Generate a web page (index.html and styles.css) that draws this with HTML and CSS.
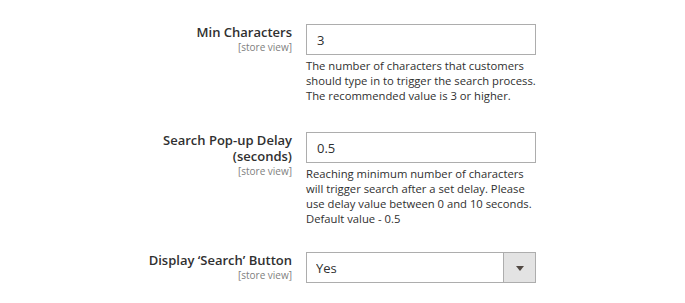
FILE: index.html
```html
<!DOCTYPE html>
<html lang="en">
<head>
<meta charset="utf-8">
<title>Search settings</title>
<link rel="stylesheet" href="styles.css">
</head>
<body>
<div class="form">
  <div class="field field-first">
    <div class="label">
      <span class="label-text">Min Characters</span>
      <span class="scope">[store view]</span>
    </div>
    <div class="control">
      <input class="input-text" type="text" value="3">
      <div class="note">The number of characters that customers should type in to trigger the search process. The recommended value is 3 or higher.</div>
    </div>
  </div>
  <div class="field">
    <div class="label">
      <span class="label-text">Search Pop-up Delay (seconds)</span>
      <span class="scope">[store view]</span>
    </div>
    <div class="control">
      <input class="input-text" type="text" value="0.5">
      <div class="note">Reaching minimum number of characters will trigger search after a set delay. Please use delay value between 0 and 10 seconds. Default value - 0.5</div>
    </div>
  </div>
  <div class="field field-select">
    <div class="label">
      <span class="label-text">Display ‘Search’ Button</span>
      <span class="scope">[store view]</span>
    </div>
    <div class="control">
      <div class="select-wrap">
        <select class="select">
          <option>Yes</option>
          <option>No</option>
        </select>
        <span class="select-button"><span class="arrow"></span></span>
      </div>
    </div>
  </div>
</div>
</body>
</html>
```
FILE: styles.css
```css
html, body {
  margin: 0;
  padding: 0;
  background: #ffffff;
}
body {
  font-family: "Open Sans", "Liberation Sans", sans-serif;
  color: #303030;
}
.form {
  display: flex;
  flex-direction: column;
  padding-top: 24px;
}
.field {
  display: grid;
  grid-template-columns: 292px 230px;
  column-gap: 14px;
  margin-top: 29px;
}
.field-first {
  margin-top: 0;
}
.field-select {
  margin-top: 26px;
}
.label {
  display: flex;
  flex-direction: column;
  align-items: flex-end;
  text-align: right;
  padding-left: 142px;
}
.label-text {
  font-size: 13px;
  font-weight: 600;
  line-height: 16px;
  color: #303030;
}
.scope {
  font-size: 10px;
  line-height: 14px;
  color: #808080;
}
.control {
  display: flex;
  flex-direction: column;
}
.input-text {
  box-sizing: border-box;
  width: 230px;
  height: 31px;
  margin: 0;
  padding: 0 10px;
  border: 1px solid #adadad;
  border-radius: 0;
  background: #ffffff;
  font-family: "Open Sans", "Liberation Sans", sans-serif;
  font-size: 13px;
  color: #303030;
  outline: none;
}
.note {
  margin-top: 3px;
  font-size: 11.25px;
  line-height: 15px;
  color: #303030;
}
.select-wrap {
  position: relative;
  width: 230px;
  height: 31px;
}
.select {
  box-sizing: border-box;
  width: 230px;
  height: 31px;
  margin: 0;
  padding: 0 40px 0 9px;
  border: 1px solid #adadad;
  border-radius: 0;
  background: #ffffff;
  font-family: "Open Sans", "Liberation Sans", sans-serif;
  font-size: 13px;
  color: #303030;
  -webkit-appearance: none;
  appearance: none;
  outline: none;
}
.select-button {
  position: absolute;
  top: 0;
  right: 0;
  box-sizing: border-box;
  width: 33px;
  height: 31px;
  border: 1px solid #adadad;
  background: #e3e3e3;
  display: flex;
  align-items: center;
  justify-content: center;
  pointer-events: none;
}
.arrow {
  width: 0;
  height: 0;
  border-left: 4px solid transparent;
  border-right: 4px solid transparent;
  border-top: 5px solid #514943;
  margin-top: 1px;
}
```
